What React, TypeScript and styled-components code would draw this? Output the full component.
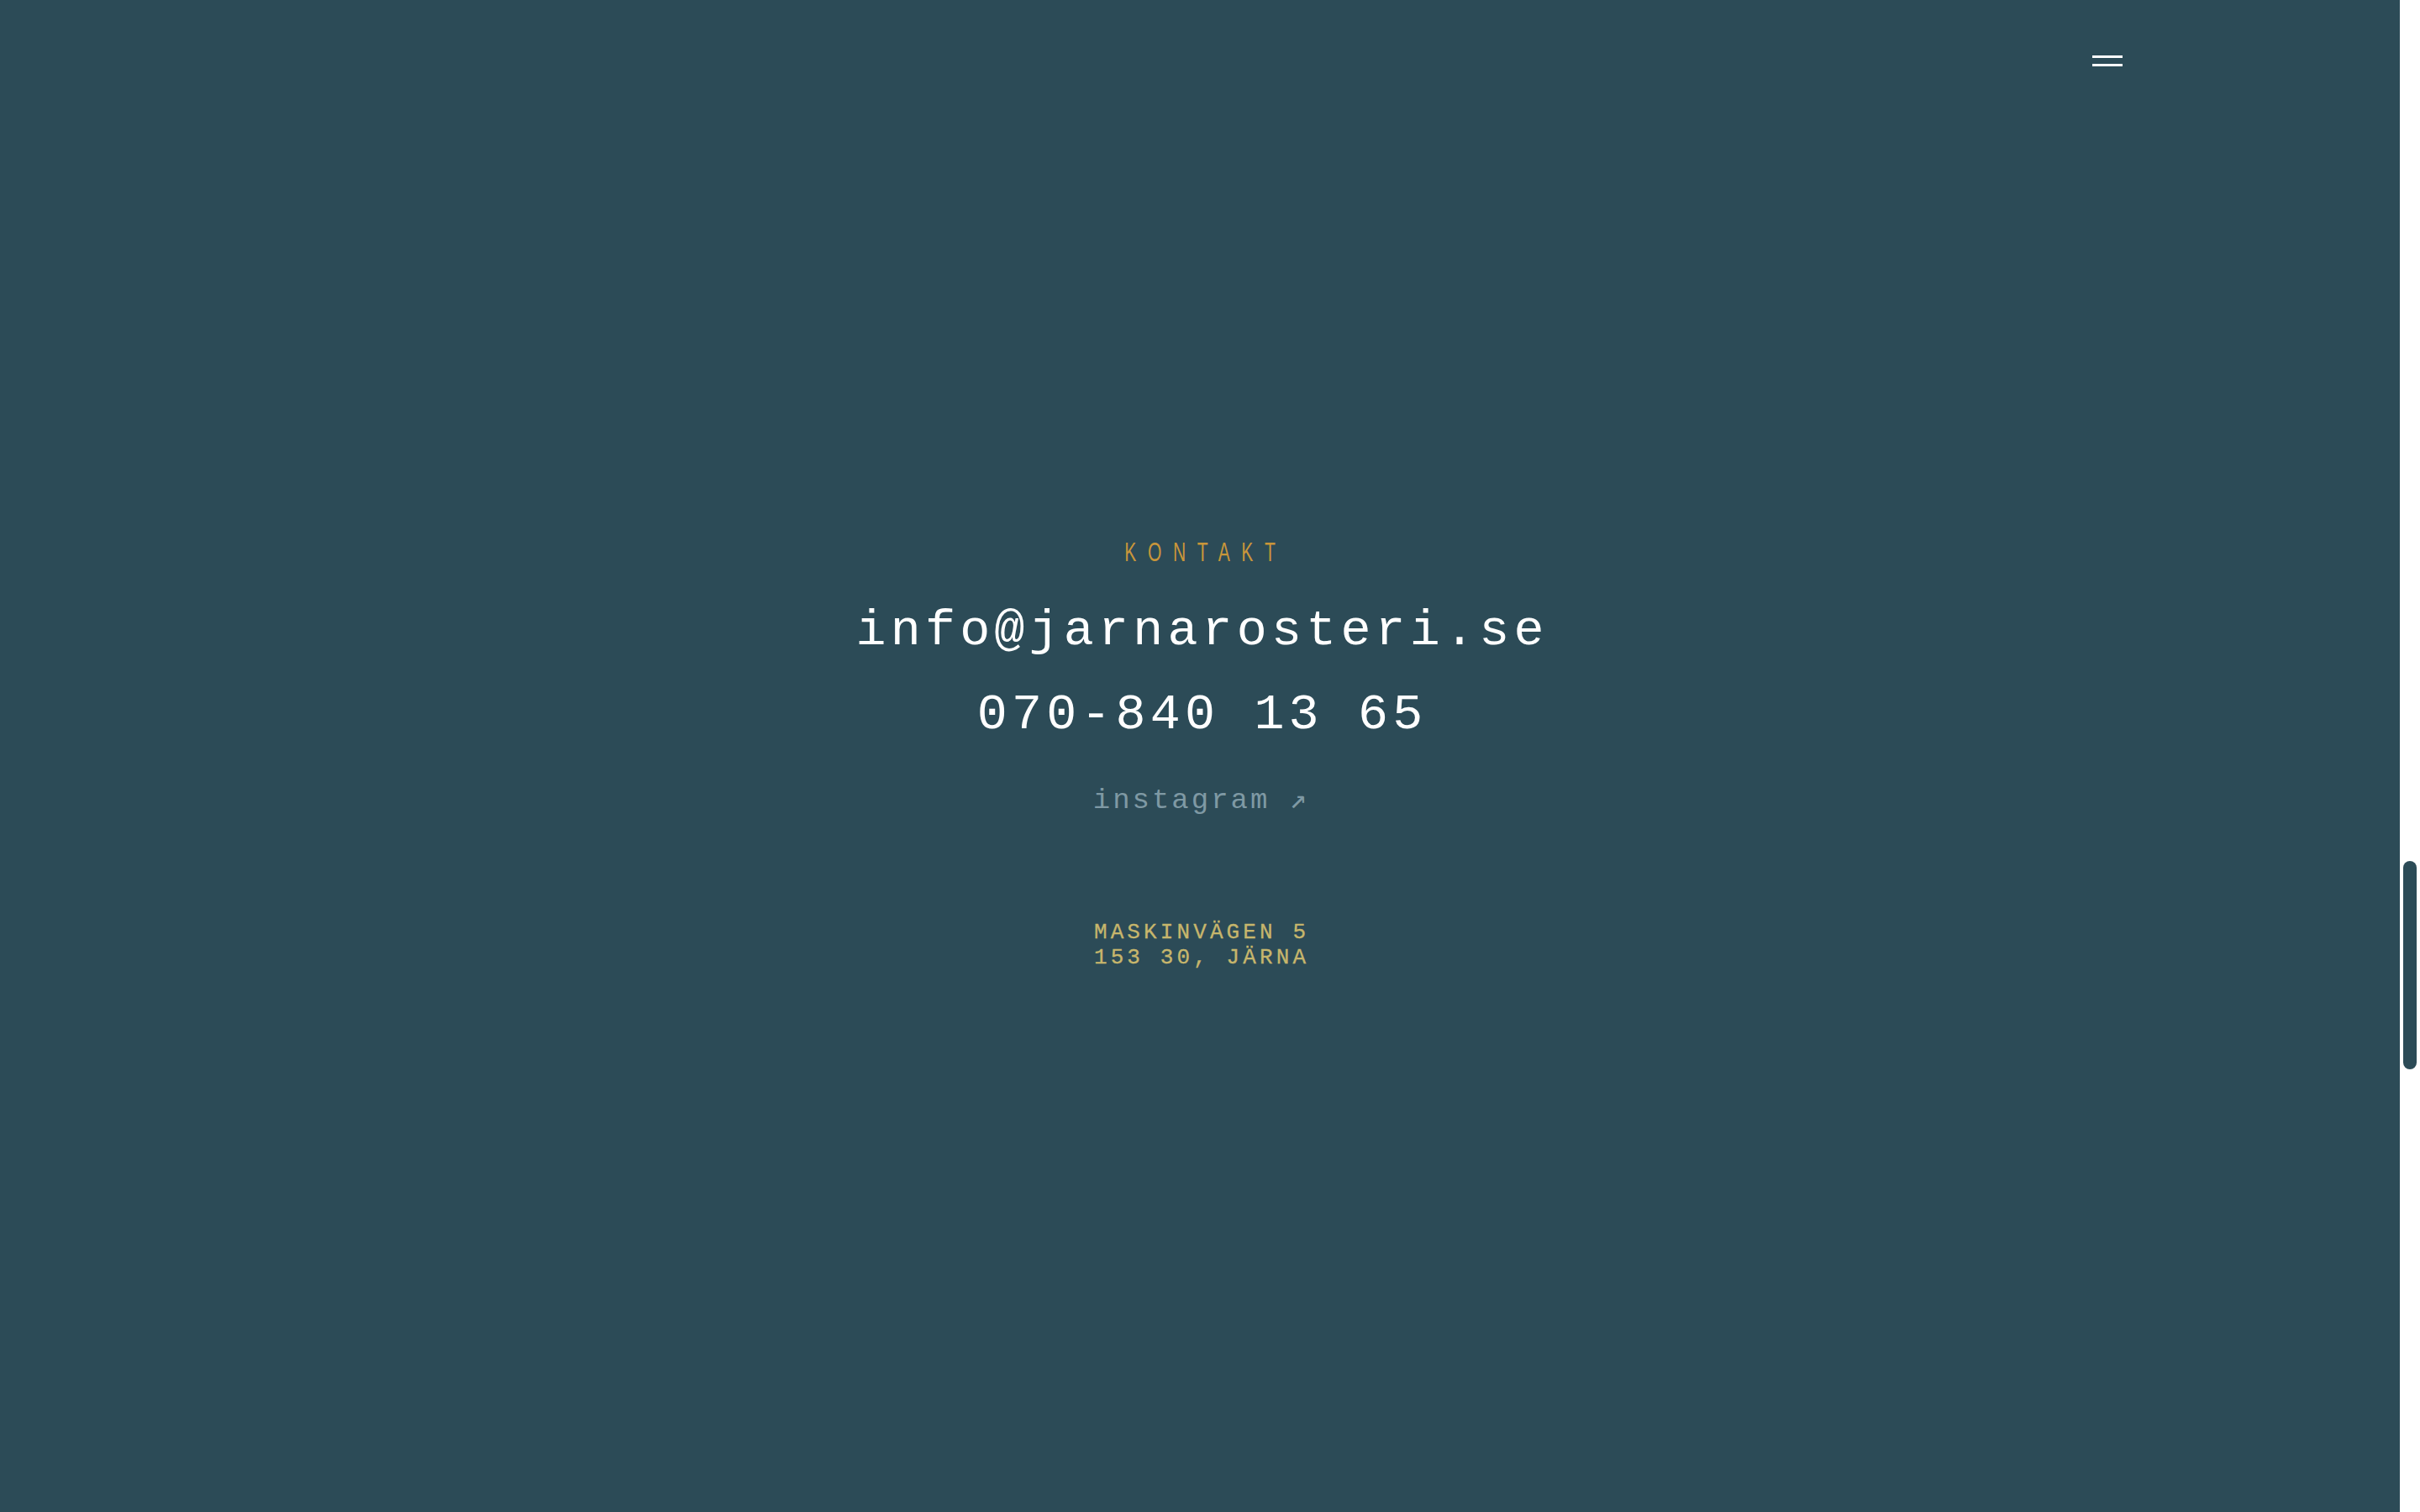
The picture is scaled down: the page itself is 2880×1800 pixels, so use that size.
import React from "react";
import styled, { createGlobalStyle } from "styled-components";

const BG = "#2c4b57";

const GlobalStyle = createGlobalStyle`
  html, body {
    margin: 0;
    padding: 0;
    height: 100%;
    overflow: hidden;
    background: ${BG};
  }
  #root { height: 100%; }
  * { box-sizing: border-box; }
`;

const Viewport = styled.div`
  display: flex;
  height: 100vh;
  width: 100vw;
`;

const Page = styled.main`
  position: relative;
  flex: 1;
  min-width: 0;
  background: ${BG};
`;

const ScrollRail = styled.div`
  width: 24px;
  flex: 0 0 24px;
  background: #ffffff;
  padding: 1025px 4px 0;
`;

const ScrollThumb = styled.div`
  width: 16px;
  height: 248px;
  border-radius: 8px;
  background: ${BG};
`;

const ContactSection = styled.section`
  height: 100%;
  display: flex;
  flex-direction: column;
  align-items: center;
  justify-content: center;
  text-align: center;
`;

const Header = styled.header`
  position: absolute;
  top: 0;
  left: 0;
  right: 0;
  display: flex;
  justify-content: flex-end;
  padding: 66px 330px 0 0;
`;

const MenuButton = styled.button`
  width: 36px;
  height: 13px;
  padding: 0;
  border: 0;
  background: transparent;
  display: flex;
  flex-direction: column;
  justify-content: space-between;
  cursor: pointer;
`;

const MenuLine = styled.span`
  display: block;
  width: 36px;
  height: 3px;
  background: #ffffff;
`;

const Eyebrow = styled.h2`
  margin: 0;
  height: 30px;
  font-family: "Liberation Sans", Arial, sans-serif;
  font-weight: 400;
  font-size: 31px;
  line-height: 26px;
  color: #c9963a;
`;

const EyebrowText = styled.span`
  display: inline-block;
  transform: scaleX(0.68);
  transform-origin: center;
  letter-spacing: 20px;
  padding-left: 20px;
`;

const BigLink = styled.a<{ $mt?: number }>`
  display: block;
  margin-top: ${(p) => p.$mt ?? 0}px;
  font-family: "Liberation Mono", "DejaVu Sans Mono", monospace;
  font-size: 60px;
  line-height: 100px;
  letter-spacing: 5.2px;
  padding-left: 5.2px;
  color: #ffffff;
  text-decoration: none;
`;

const SocialLink = styled.a`
  display: block;
  margin-top: 32px;
  font-family: "Liberation Mono", "DejaVu Sans Mono", monospace;
  font-size: 34px;
  line-height: 40px;
  letter-spacing: 3px;
  padding-left: 3px;
  color: #7f99a4;
  text-decoration: none;
`;

const Address = styled.address`
  margin-top: 122px;
  font-style: normal;
  font-family: "Liberation Mono", "DejaVu Sans Mono", monospace;
  font-size: 26px;
  line-height: 30px;
  letter-spacing: 4.1px;
  padding-left: 4.1px;
  color: #c7b66c;
  text-transform: uppercase;
  -webkit-text-stroke: 0.3px #c7b66c;
`;

const AddressLine = styled.div``;

export default function App() {
  return (
    <>
      <GlobalStyle />
      <Viewport>
        <Page>
          <ContactSection id="kontakt">
            <Eyebrow>
              <EyebrowText>KONTAKT</EyebrowText>
            </Eyebrow>
            <BigLink $mt={26} href="mailto:info@jarnarosteri.se">
              info@jarnarosteri.se
            </BigLink>
            <BigLink href="tel:0708401365">070-840 13 65</BigLink>
            <SocialLink href="#">instagram ↗</SocialLink>
            <Address>
              <AddressLine>Maskinvägen 5</AddressLine>
              <AddressLine>153 30, Järna</AddressLine>
            </Address>
          </ContactSection>
          <Header>
            <MenuButton aria-label="Meny">
              <MenuLine />
              <MenuLine />
            </MenuButton>
          </Header>
        </Page>
        <ScrollRail>
          <ScrollThumb />
        </ScrollRail>
      </Viewport>
    </>
  );
}
